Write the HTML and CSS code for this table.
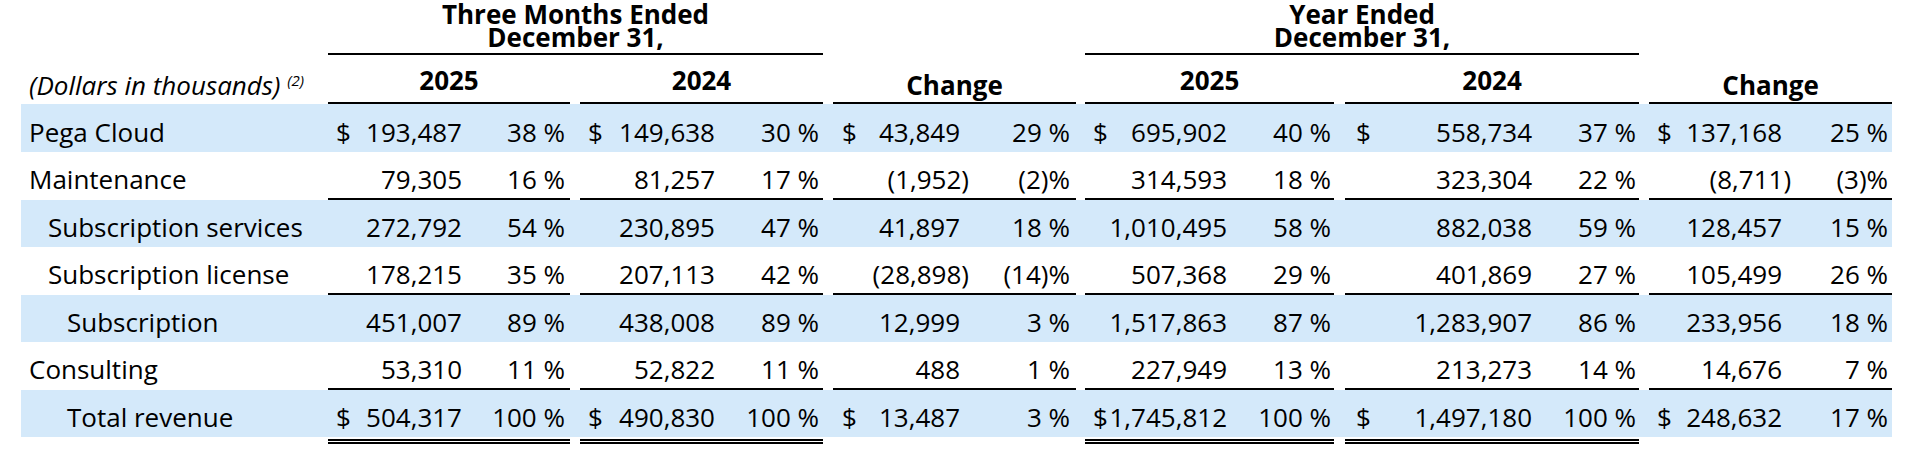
FILE: index.html
```html
<!DOCTYPE html>
<html lang="en">
<head>
<meta charset="utf-8">
<title>Revenue</title>
<link rel="stylesheet" href="styles.css">
</head>
<body>
<div class="wrap">
<table class="fin">
  <colgroup>
    <col class="w-label">
    <col class="w24"><col class="w110"><col class="w108">
    <col class="w10">
    <col class="w24"><col class="w111"><col class="w108">
    <col class="w10">
    <col class="w25"><col class="w102"><col class="w116">
    <col class="w9">
    <col class="w23"><col class="w119"><col class="w107">
    <col class="w11">
    <col class="w27"><col class="w160"><col class="w107">
    <col class="w10">
    <col class="w24"><col class="w109"><col class="w110">
  </colgroup>
  <thead>
    <tr class="h1">
      <th></th>
      <th colspan="7" class="period">Three Months Ended<br>December 31,</th>
      <th></th>
      <th colspan="3"></th>
      <th></th>
      <th colspan="7" class="period">Year Ended<br>December 31,</th>
      <th></th>
      <th colspan="3"></th>
    </tr>
    <tr class="h2">
      <th class="unit">(Dollars in thousands) <sup>(2)</sup></th>
      <th colspan="3" class="yr">2025</th>
      <th></th>
      <th colspan="3" class="yr">2024</th>
      <th></th>
      <th colspan="3" class="chg">Change</th>
      <th></th>
      <th colspan="3" class="yr">2025</th>
      <th></th>
      <th colspan="3" class="yr">2024</th>
      <th></th>
      <th colspan="3" class="chg">Change</th>
    </tr>
  </thead>
  <tbody>
    <tr class="shade first">
      <td class="lbl">Pega Cloud</td>
      <td class="cur">$</td><td class="amt">193,487</td><td class="pct">38 %</td><td class="sp"></td>
      <td class="cur">$</td><td class="amt">149,638</td><td class="pct">30 %</td><td class="sp"></td>
      <td class="cur">$</td><td class="amt">43,849</td><td class="pct">29 %</td><td class="sp"></td>
      <td class="cur">$</td><td class="amt">695,902</td><td class="pct">40 %</td><td class="sp"></td>
      <td class="cur">$</td><td class="amt">558,734</td><td class="pct">37 %</td><td class="sp"></td>
      <td class="cur">$</td><td class="amt">137,168</td><td class="pct">25 %</td>
    </tr>
    <tr class="ul">
      <td class="lbl">Maintenance</td>
      <td class="cur"></td><td class="amt">79,305</td><td class="pct">16 %</td><td class="sp"></td>
      <td class="cur"></td><td class="amt">81,257</td><td class="pct">17 %</td><td class="sp"></td>
      <td class="cur"></td><td class="amt">(1,952<span class="cp">)</span></td><td class="pct">(2)%</td><td class="sp"></td>
      <td class="cur"></td><td class="amt">314,593</td><td class="pct">18 %</td><td class="sp"></td>
      <td class="cur"></td><td class="amt">323,304</td><td class="pct">22 %</td><td class="sp"></td>
      <td class="cur"></td><td class="amt">(8,711<span class="cp">)</span></td><td class="pct">(3)%</td>
    </tr>
    <tr class="shade">
      <td class="lbl lv1">Subscription services</td>
      <td class="cur"></td><td class="amt">272,792</td><td class="pct">54 %</td><td class="sp"></td>
      <td class="cur"></td><td class="amt">230,895</td><td class="pct">47 %</td><td class="sp"></td>
      <td class="cur"></td><td class="amt">41,897</td><td class="pct">18 %</td><td class="sp"></td>
      <td class="cur"></td><td class="amt">1,010,495</td><td class="pct">58 %</td><td class="sp"></td>
      <td class="cur"></td><td class="amt">882,038</td><td class="pct">59 %</td><td class="sp"></td>
      <td class="cur"></td><td class="amt">128,457</td><td class="pct">15 %</td>
    </tr>
    <tr class="ul">
      <td class="lbl lv1">Subscription license</td>
      <td class="cur"></td><td class="amt">178,215</td><td class="pct">35 %</td><td class="sp"></td>
      <td class="cur"></td><td class="amt">207,113</td><td class="pct">42 %</td><td class="sp"></td>
      <td class="cur"></td><td class="amt">(28,898<span class="cp">)</span></td><td class="pct">(14)%</td><td class="sp"></td>
      <td class="cur"></td><td class="amt">507,368</td><td class="pct">29 %</td><td class="sp"></td>
      <td class="cur"></td><td class="amt">401,869</td><td class="pct">27 %</td><td class="sp"></td>
      <td class="cur"></td><td class="amt">105,499</td><td class="pct">26 %</td>
    </tr>
    <tr class="shade">
      <td class="lbl lv2">Subscription</td>
      <td class="cur"></td><td class="amt">451,007</td><td class="pct">89 %</td><td class="sp"></td>
      <td class="cur"></td><td class="amt">438,008</td><td class="pct">89 %</td><td class="sp"></td>
      <td class="cur"></td><td class="amt">12,999</td><td class="pct">3 %</td><td class="sp"></td>
      <td class="cur"></td><td class="amt">1,517,863</td><td class="pct">87 %</td><td class="sp"></td>
      <td class="cur"></td><td class="amt">1,283,907</td><td class="pct">86 %</td><td class="sp"></td>
      <td class="cur"></td><td class="amt">233,956</td><td class="pct">18 %</td>
    </tr>
    <tr class="ul">
      <td class="lbl">Consulting</td>
      <td class="cur"></td><td class="amt">53,310</td><td class="pct">11 %</td><td class="sp"></td>
      <td class="cur"></td><td class="amt">52,822</td><td class="pct">11 %</td><td class="sp"></td>
      <td class="cur"></td><td class="amt">488</td><td class="pct">1 %</td><td class="sp"></td>
      <td class="cur"></td><td class="amt">227,949</td><td class="pct">13 %</td><td class="sp"></td>
      <td class="cur"></td><td class="amt">213,273</td><td class="pct">14 %</td><td class="sp"></td>
      <td class="cur"></td><td class="amt">14,676</td><td class="pct">7 %</td>
    </tr>
    <tr class="total">
      <td class="lbl lv2">Total revenue</td>
      <td class="cur">$</td><td class="amt">504,317</td><td class="pct">100 %</td><td class="sp"></td>
      <td class="cur">$</td><td class="amt">490,830</td><td class="pct">100 %</td><td class="sp"></td>
      <td class="cur nodbl">$</td><td class="amt nodbl">13,487</td><td class="pct nodbl">3 %</td><td class="sp"></td>
      <td class="cur">$</td><td class="amt">1,745,812</td><td class="pct">100 %</td><td class="sp"></td>
      <td class="cur">$</td><td class="amt">1,497,180</td><td class="pct">100 %</td><td class="sp"></td>
      <td class="cur nodbl">$</td><td class="amt nodbl">248,632</td><td class="pct nodbl">17 %</td>
    </tr>
  </tbody>
</table>
</div>
</body>
</html>
```

FILE: styles.css
```css
html, body {
  margin: 0;
  padding: 0;
  background: #ffffff;
}

body {
  font-family: "Open Sans", "Noto Sans", sans-serif;
  font-size: 26px;
  color: #000000;
}

.wrap {
  padding-left: 21px;
}

.fin {
  table-layout: fixed;
  width: 1871px;
  border-collapse: separate;
  border-spacing: 0;
}

.fin th,
.fin td {
  padding: 0;
  vertical-align: top;
  white-space: nowrap;
}

/* column widths */
.w-label { width: 307px; }
.w9 { width: 9px; }
.w10 { width: 10px; }
.w11 { width: 11px; }
.w23 { width: 23px; }
.w24 { width: 24px; }
.w25 { width: 25px; }
.w27 { width: 27px; }
.w102 { width: 102px; }
.w107 { width: 107px; }
.w108 { width: 108px; }
.w109 { width: 109px; }
.w110 { width: 110px; }
.w111 { width: 111px; }
.w116 { width: 116px; }
.w119 { width: 119px; }
.w160 { width: 160px; }

/* header row 1 */
.fin .h1 th {
  font-weight: 700;
  line-height: 23px;
  padding-top: 3px;
  padding-bottom: 4px;
  text-align: center;
}

.fin .h1 th.period {
  border-bottom: 2px solid #000;
}

/* header row 2 */
.fin .h2 th {
  font-weight: 700;
  line-height: 30px;
  padding-top: 15px;
  padding-bottom: 2px;
  text-align: center;
}

.fin .h2 th.unit {
  font-weight: 400;
  font-style: italic;
  text-align: left;
  padding-left: 8px;
}

.fin .h2 th.unit sup {
  font-size: 15px;
  line-height: 0;
  vertical-align: 9px;
}

.fin .h2 th.yr {
  padding-top: 10px;
  padding-bottom: 7px;
  border-bottom: 2px solid #000;
}

.fin .h2 th.chg {
  border-bottom: 2px solid #000;
}

/* body rows */
.fin tbody td {
  padding-top: 8px;
  line-height: 39px;
}

.fin tbody tr.first td {
  padding-top: 9px;
}

.fin tbody tr.shade td {
  background: #d4e9fa;
}

.fin tbody tr.ul td {
  line-height: 38px;
}

.fin tbody tr.ul td.cur,
.fin tbody tr.ul td.amt,
.fin tbody tr.ul td.pct {
  border-bottom: 2px solid #000;
}

.fin tbody tr.total td {
  padding-bottom: 2px;
  border-bottom: 5px double transparent;
  background-image: linear-gradient(#d4e9fa, #d4e9fa);
  background-repeat: no-repeat;
  background-position: top left;
  background-size: 100% calc(100% - 2px);
}

.fin tbody tr.total td.cur,
.fin tbody tr.total td.amt,
.fin tbody tr.total td.pct {
  border-bottom-color: #000;
}

.fin tbody tr.total td.nodbl {
  border-bottom-color: transparent;
}

.fin tbody td.lbl {
  text-align: left;
  padding-left: 8px;
}

.fin tbody td.lbl.lv1 { padding-left: 27px; }
.fin tbody td.lbl.lv2 { padding-left: 46px; }

.fin td.cur {
  text-align: left;
}

.fin td.amt {
  text-align: right;
}

.fin td.pct {
  text-align: right;
}

.cp {
  margin-right: -9px;
}

/* per-group fine alignment */
.fin tbody td:nth-child(2) { padding-left: 8px; }
.fin tbody td:nth-child(4) { padding-right: 5px; }
.fin tbody td:nth-child(6) { padding-left: 8px; }
.fin tbody td:nth-child(8) { padding-right: 4px; }
.fin tbody td:nth-child(10) { padding-left: 9px; }
.fin tbody td:nth-child(12) { padding-right: 6px; }
.fin tbody td:nth-child(14) { padding-left: 8px; }
.fin tbody td:nth-child(16) { padding-right: 3px; }
.fin tbody td:nth-child(18) { padding-left: 11px; }
.fin tbody td:nth-child(20) { padding-right: 3px; }
.fin tbody td:nth-child(22) { padding-left: 8px; }
.fin tbody td:nth-child(24) { padding-right: 4px; }
```
